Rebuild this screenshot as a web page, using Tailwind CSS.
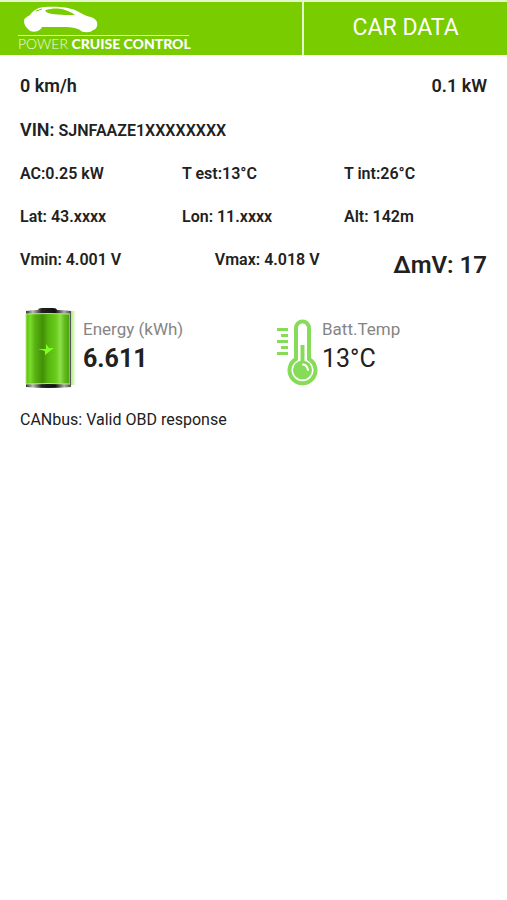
<!DOCTYPE html>
<html lang="en">
<head>
    <meta charset="UTF-8">
    <meta name="viewport" content="width=device-width, initial-scale=1.0">
    <title>Power Cruise Control - Car Data</title>
    <script src="https://cdn.jsdelivr.net/npm/@tailwindcss/browser@4"></script>
</head>
<body class="bg-white text-[#212121] font-['Roboto',sans-serif]">
    <header class="flex h-[55px] border-t-2 border-[#e4f6cc] text-white">
        <div class="w-3/5 bg-[#78cc00] border-r-2 border-[#e4f6cc] pl-[18px] pt-1">
            <!-- car logo -->
            <svg class="ml-1 block" width="76" height="27" viewBox="0 0 76 27" fill="none">
                <path fill="#fff" d="M8 9C11 5 14 2 22 1C34 0 46 1 53 4C58 6 62 9 65 10C70 11 74 13 75 16C76 20 74 24 71 24C69 27 60 27 58 24C54 22 50 21 42 21H20C18 26 10 27 7 24C4 21 2 19 2 15C2 12 5 11 8 9Z"/>
                <path fill="#78cc00" d="M24 4C30 2 38 2 43 4C48 6 51 7 53 9C45 9 34 9 26 7L23 5Z"/>
                <path stroke="#78cc00" stroke-width="1" d="M14 5L20 3"/>
            </svg>
            <p class="w-[171px] border-t border-white/80 mt-[2px] text-sm leading-4 whitespace-nowrap font-['Lato',sans-serif]"><span class="font-light text-white/90">POWER</span> <span class="font-black">CRUISE CONTROL</span></p>
        </div>
        <h1 class="flex-1 bg-[#78cc00] flex items-center justify-center text-[23px]">CAR DATA</h1>
    </header>

    <main class="px-5 pt-[9px] text-base font-semibold">
        <div class="flex justify-between items-center h-11 text-lg">
            <span>0 km/h</span>
            <span>0.1 kW</span>
        </div>
        <div class="flex items-baseline gap-1 h-11 pt-2 text-lg">
            <span>VIN:</span>
            <span class="text-base">SJNFAAZE1XXXXXXXX</span>
        </div>
        <div class="grid grid-cols-[162px_162px_1fr]">
            <span class="leading-[43px]">AC:0.25 kW</span>
            <span class="leading-[43px]">T est:13°C</span>
            <span class="leading-[43px]">T int:26°C</span>
            <span class="leading-[43px]">Lat: 43.xxxx</span>
            <span class="leading-[43px]">Lon: 11.xxxx</span>
            <span class="leading-[43px]">Alt: 142m</span>
        </div>
        <div class="flex items-start justify-between">
            <span class="leading-[43px]">Vmin: 4.001 V</span>
            <span class="leading-[43px] ml-5">Vmax: 4.018 V</span>
            <span class="text-2xl leading-[54px]">ΔmV: 17</span>
        </div>

        <div class="grid grid-cols-[256px_1fr] mt-[14px]">
            <div class="flex">
                <!-- battery -->
                <svg width="60" height="84" viewBox="0 0 60 84">
                    <defs>
                        <linearGradient id="body">
                            <stop offset="0" stop-color="#5cc010"/>
                            <stop offset=".1" stop-color="#78dc28"/>
                            <stop offset=".2" stop-color="#5ab414"/>
                            <stop offset=".38" stop-color="#429006"/>
                            <stop offset=".5" stop-color="#57b50e"/>
                            <stop offset=".68" stop-color="#68cc1c"/>
                            <stop offset=".78" stop-color="#8ee04a"/>
                            <stop offset=".88" stop-color="#60bc1a"/>
                            <stop offset="1" stop-color="#4a9c14"/>
                        </linearGradient>
                        <linearGradient id="cap">
                            <stop offset="0" stop-color="#333"/>
                            <stop offset=".15" stop-color="#bbb"/>
                            <stop offset=".35" stop-color="#222"/>
                            <stop offset=".65" stop-color="#111"/>
                            <stop offset=".85" stop-color="#aaa"/>
                            <stop offset="1" stop-color="#444"/>
                        </linearGradient>
                        <linearGradient id="glow">
                            <stop offset="0" stop-color="#9ee85c"/>
                            <stop offset="1" stop-color="#fff"/>
                        </linearGradient>
                    </defs>
                    <rect x="50" y="5" width="6" height="74" fill="url(#glow)"/>
                    <path fill="url(#cap)" d="M6 5Q12 4 18 4Q18 2 22 2H33Q37 2 37 4Q44 4 51 5V10H6Z"/>
                    <path fill="url(#cap)" d="M6 77H51V81Q40 82 28 82Q16 82 6 81Z"/>
                    <path fill="url(#body)" stroke="#b4ec7c" stroke-width="1" d="M6 8Q28 7 50 8V78Q28 77 6 78Z"/>
                    <path stroke="#555" stroke-width="1" d="M50.500 5V81"/>
                    <path fill="#7dff22" d="M26 38L29 42L34 42L25 49L25 45L18 43L26 43Z"/>
                </svg>
                <div class="pl-[3px] pt-[11px]">
                    <p class="text-[17px] leading-6 font-normal text-[#858585]">Energy (kWh)</p>
                    <p class="text-[25px] leading-9 font-bold">6.611</p>
                </div>
            </div>
            <div class="flex">
                <!-- thermometer -->
                <svg class="mt-[13px]" width="42" height="68" viewBox="0 0 42 68" fill="none">
                    <path stroke="#86dc58" stroke-width="3" d="M1 10.500H12M5 16.500H12M1 22.500H12M5 28.500H12M1 34.500H12"/>
                    <path stroke="#86dc58" stroke-width="4" d="M20 40V9A6.500 6.500 0 0 1 33 9V40A13 13 0 1 1 20 40Z"/>
                    <path stroke="#86dc58" stroke-width="4" d="M26.500 26V44"/>
                    <circle cx="26.500" cy="51" r="9.500" fill="#86dc58"/>
                    <path stroke="#fff" stroke-width="2" stroke-linecap="round" d="M27 45.500Q31 46 32 51"/>
                </svg>
                <div class="pl-1 pt-[11px]">
                    <p class="text-[17px] leading-6 font-normal text-[#858585]">Batt.Temp</p>
                    <p class="text-[25px] leading-9 font-normal">13°C</p>
                </div>
            </div>
        </div>

        <p class="mt-[18px] text-base leading-6 font-normal">CANbus: Valid OBD response</p>
    </main>
</body>
</html>
